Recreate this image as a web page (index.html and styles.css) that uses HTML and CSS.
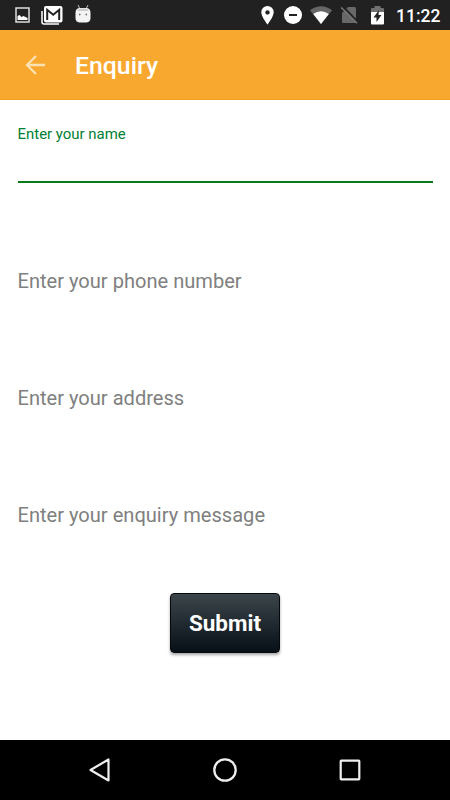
FILE: index.html
```html
<!DOCTYPE html>
<html lang="en">
<head>
<meta charset="utf-8">
<title>Enquiry</title>
<link rel="stylesheet" href="styles.css">
</head>
<body>
<div class="screen">
  <div class="status">
    <div class="notifications">
      <svg width="15" height="16" viewBox="0 0 15 16"><rect x="1" y="1" width="13" height="14" fill="none" stroke="#ddd" stroke-width="1.5"/><path d="M2.500 13V9l2-1 2 2 2-1 4 2v2z" fill="#fff"/></svg>
      <svg width="22" height="19" viewBox="0 0 22 19"><path d="M1 5v11q0 2 2 2h15" fill="none" stroke="#fff" stroke-width="1.5"/><rect x="3" y="0" width="18.5" height="16.500" rx="2" fill="#fff"/><path d="M6.200 14V3.800l6 5 6-5V14" fill="none" stroke="#222" stroke-width="2"/></svg>
      <svg width="16" height="18" viewBox="0 0 16 18"><path d="M3 0l2 4M13 0l-2 4" stroke="#bbb" stroke-width="1"/><path d="M.5 8Q.5 3 5 3h6q4.500 0 4.500 5v5q0 4-4 4.500h-7Q.5 17 .5 13z" fill="#f4f4f4"/><path d="M2 6q1-2.500 4-2.500h4q3 0 4 2.500z" fill="#ccc"/><circle cx="4.700" cy="9.500" r=".9" fill="#777"/><circle cx="11.300" cy="9.500" r=".9" fill="#777"/></svg>
    </div>
    <div class="system">
      <svg width="13" height="19" viewBox="0 0 13 19"><path fill-rule="evenodd" d="M6.500 0A6.200 6.200 0 0 0 .3 6.200C.3 10.800 6.500 18.500 6.500 18.500S12.700 10.800 12.700 6.200A6.200 6.200 0 0 0 6.500 0zm0 4.200a2.200 2.200 0 1 1 0 4.400 2.200 2.200 0 0 1 0-4.400z" fill="#fff"/></svg>
      <svg class="dnd" width="18" height="18" viewBox="0 0 18 18"><circle cx="9" cy="9" r="9" fill="#fff"/><path d="M5 9h8" stroke="#222" stroke-width="2"/></svg>
      <svg class="wifi" width="22" height="18" viewBox="0 0 22 18"><path d="M0 4.200Q11-3.800 22 4.200L11 18z" fill="#666"/><path d="M3.200 8Q11 2.500 18.800 8L11 18z" fill="#fff"/></svg>
      <svg class="sim" width="18" height="18" viewBox="0 0 18 18"><path d="M7 1h6.500Q15 1 15 2.500V17H2.500Q1 17 1 15.500V7z" fill="#686868"/><path d="M1.500 0l16 16.500" stroke="#222" stroke-width="1.800"/><path d="M0 1.200l16 16" stroke="#777" stroke-width="1.400"/></svg>
      <svg class="battery" width="13" height="19" viewBox="0 0 13 19"><path d="M0 3q0-1 1-1h2.500V0h6v2H12q1 0 1 1v3H0z" fill="#707070"/><path d="M0 6h13v11.500q0 1-1 1H1q-1 0-1-1z" fill="#fff"/><path d="M8 4L2.500 11.500h3V16l5-7h-3z" fill="#222"/></svg>
      <span class="time">11:22</span>
    </div>
  </div>
  <header class="appbar">
    <svg width="20" height="20" viewBox="0 0 20 20"><path d="M20 10H2M11 1L2 10l9 9" fill="none" stroke="#fee1b3" stroke-width="2.300"/></svg>
    <h1>Enquiry</h1>
  </header>
  <main class="form">
    <div class="field active">Enter your name</div>
    <div class="field">Enter your phone number</div>
    <div class="field">Enter your address</div>
    <div class="field">Enter your enquiry message</div>
    <button class="submit" type="button">Submit</button>
  </main>
  <nav class="navbar">
    <svg width="24" height="26" viewBox="0 0 24 26"><path d="M20.500 2.500v21L2.500 13z" fill="none" stroke="#eee" stroke-width="2.200" stroke-linejoin="round"/></svg>
    <svg width="24" height="24" viewBox="0 0 24 24"><circle cx="12" cy="12" r="10.700" fill="none" stroke="#eee" stroke-width="2.300"/></svg>
    <svg width="24" height="22" viewBox="0 0 24 22"><rect x="2.700" y="1.700" width="18.600" height="18.600" rx=".5" fill="none" stroke="#eee" stroke-width="2.200"/></svg>
  </nav>
</div>
</body>
</html>
```
FILE: styles.css
```css
* { box-sizing: border-box; }
body { margin: 0; font-family: Roboto, sans-serif; }
svg { display: block; flex: none; }
.screen { width: 450px; height: 800px; display: flex; flex-direction: column; background: #fff; }
.status { height: 30px; background: #212121; display: flex; justify-content: space-between; padding: 0 10px 0 15px; }
.notifications, .system { display: flex; align-items: center; }
.notifications { gap: 11.4px; }
.notifications svg:last-child { margin-top: -3px; }
.dnd { margin-left: 10px; }
.wifi { margin-left: 8px; }
.sim { margin-left: 9px; }
.battery { margin-left: 12px; }
.time { width: 44px; margin-left: 12px; padding-top: 2px; color: #fff; font-size: 17.5px; font-weight: 500; line-height: 30px; white-space: nowrap; }
.appbar { height: 70px; background: #f9a82f; border-bottom: 1px solid #f5a01c; display: flex; align-items: center; padding-left: 25px; gap: 30px; }
.appbar h1 { margin: 3px 0 0; color: #fff; font-size: 24.8px; font-weight: 500; line-height: 30px; }
.form { flex: 1; display: flex; flex-direction: column; padding: 22px 17.5px 0; }
.field { height: 117px; padding-top: 27px; color: #808080; font-size: 20.08px; line-height: 24px; white-space: nowrap; }
.field.active { height: 61px; margin-bottom: 59px; padding-top: 2px; border-bottom: 2px solid #087a18; color: #008033; font-size: 14.95px; line-height: 20px; }
.submit { align-self: center; width: 110px; height: 60px; padding: 0 0 1px; border: 1px solid #05090c; border-radius: 4px; background: linear-gradient(#3c454a, #071017); box-shadow: 0 2px 3px rgba(0, 0, 0, .35); color: #fff; font: 700 22.5px Roboto, sans-serif; }
.navbar { height: 60px; background: #000; display: flex; align-items: center; justify-content: space-between; padding: 0 88px; }
```
